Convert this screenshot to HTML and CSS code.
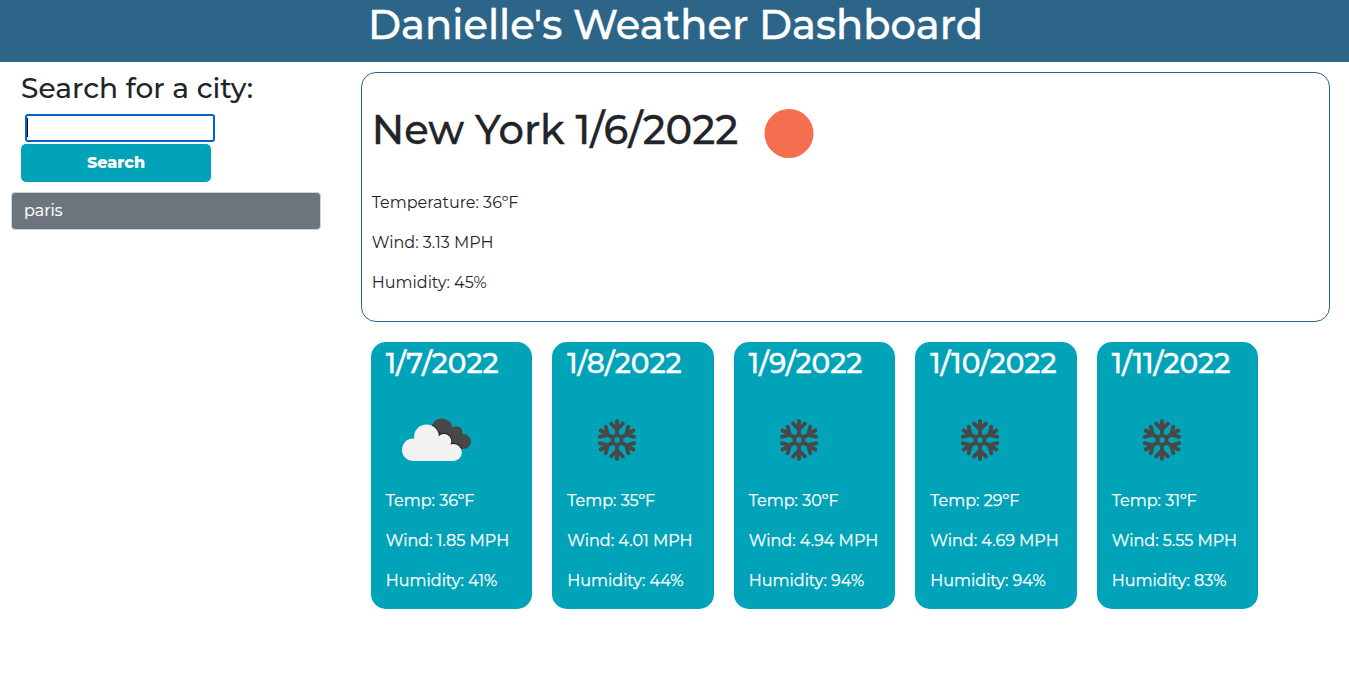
FILE: index.html
```html
<!DOCTYPE html>
<html lang="en">
<head>
<meta charset="utf-8">
<title>Weather Dashboard</title>
<link rel="stylesheet" href="styles.css">
</head>
<body>
<svg class="defs" aria-hidden="true">
  <symbol id="snow" viewBox="0 0 100 100">
    <g fill="none" stroke="#484848" stroke-width="3.9" stroke-linecap="round" stroke-linejoin="round">
      <g id="arm"><path d="M50 45V31.1M44.2 33.6L50 39.4L55.8 33.6"/></g>
      <use href="#arm" transform="rotate(60 50 50)"/>
      <use href="#arm" transform="rotate(120 50 50)"/>
      <use href="#arm" transform="rotate(180 50 50)"/>
      <use href="#arm" transform="rotate(240 50 50)"/>
      <use href="#arm" transform="rotate(300 50 50)"/>
      <circle cx="50" cy="50" r="4.5" stroke-width="3.6"/>
    </g>
  </symbol>
</svg>
<header class="banner"><h1 class="banner-title">Danielle's Weather Dashboard</h1></header>
<main class="layout">
  <aside class="sidebar">
    <form class="search">
      <h3 class="search-title">Search for a city:</h3>
      <input class="search-input" type="text" aria-label="City">
      <button class="search-button" type="button">Search</button>
    </form>
    <ul class="history"><li class="history-item">paris</li></ul>
  </aside>
  <div class="content">
    <section class="current">
      <div class="current-head">
        <h1 class="current-title">New York 1/6/2022</h1>
        <svg class="icon" viewBox="0 0 100 100"><circle cx="50" cy="49.5" r="24.5" fill="#f66e50"/></svg>
      </div>
      <p class="line">Temperature: 36ºF</p>
      <p class="line">Wind: 3.13 MPH</p>
      <p class="line">Humidity: 45%</p>
    </section>
    <section class="forecast">
      <article class="card">
        <h3 class="card-title">1/7/2022</h3>
        <svg class="icon" viewBox="0 0 100 100">
          <clipPath id="back"><circle cx="56" cy="39.3" r="10.8"/><circle cx="70.5" cy="42.3" r="6"/><circle cx="77.5" cy="51.5" r="7.5"/><path d="M55 38L72 40L80 55L70 59H50Z"/></clipPath>
          <g clip-path="url(#back)">
            <path fill="#48484a" d="M30 20H90V80H30Z"/>
            <g fill="none" stroke="#26282b" stroke-width="2.4"><circle cx="40.5" cy="46.8" r="12.4"/><circle cx="58" cy="51.3" r="7.3"/><circle cx="67.3" cy="62.5" r="8.5"/></g>
          </g>
          <g fill="#f2f2f0"><circle cx="27.3" cy="59.8" r="11.3"/><circle cx="40.5" cy="46.8" r="12.4"/><circle cx="58" cy="51.3" r="7.3"/><circle cx="67.3" cy="62.5" r="8.5"/><path d="M27 52L40 40L59 50L68 61V71H27Z"/></g>
        </svg>
        <p class="line">Temp: 36ºF</p><p class="line">Wind: 1.85 MPH</p><p class="line">Humidity: 41%</p>
      </article>
      <article class="card">
        <h3 class="card-title">1/8/2022</h3>
        <svg class="icon"><use href="#snow"/></svg>
        <p class="line">Temp: 35ºF</p><p class="line">Wind: 4.01 MPH</p><p class="line">Humidity: 44%</p>
      </article>
      <article class="card">
        <h3 class="card-title">1/9/2022</h3>
        <svg class="icon"><use href="#snow"/></svg>
        <p class="line">Temp: 30ºF</p><p class="line">Wind: 4.94 MPH</p><p class="line">Humidity: 94%</p>
      </article>
      <article class="card">
        <h3 class="card-title">1/10/2022</h3>
        <svg class="icon"><use href="#snow"/></svg>
        <p class="line">Temp: 29ºF</p><p class="line">Wind: 4.69 MPH</p><p class="line">Humidity: 94%</p>
      </article>
      <article class="card">
        <h3 class="card-title">1/11/2022</h3>
        <svg class="icon"><use href="#snow"/></svg>
        <p class="line">Temp: 31ºF</p><p class="line">Wind: 5.55 MPH</p><p class="line">Humidity: 83%</p>
      </article>
    </section>
  </div>
</main>
</body>
</html>
```
FILE: styles.css
```css
* { box-sizing: border-box; }
body { margin: 0; background: #fff; color: #212529; font: 400 16px/24px Montserrat, Inter, sans-serif; white-space: nowrap; }
h1, h3, p, ul { margin: 0; padding: 0; font-weight: 500; }
.defs { display: block; width: 0; height: 0; }
.banner { height: 62px; padding: 1px 0 0 2px; background: #2d6588; color: #fff; text-align: center; }
.banner-title { font-size: 40px; line-height: 48px; -webkit-text-stroke: 0.4px; }
.layout { display: flex; }
.sidebar { flex: none; width: 360.75px; padding: 9px 39.75px 0 11px; }
.search { display: flex; flex-direction: column; align-items: flex-start; padding-left: 10px; }
.search-title { font-size: 28px; line-height: 34px; letter-spacing: 0.04px; }
.search-input { width: 190px; height: 28px; margin: 9px 0 2px 4px; border: 2px solid #0560c9; border-radius: 3px; outline: 0; background: linear-gradient(#000, #000) 0 2px / 1px 19px no-repeat #fff; }
.search-button { width: 190px; height: 38px; border: 0; border-radius: 5px; background: #00a3b8; color: #fff; font: 800 16px/24px Montserrat, Inter, sans-serif; }
.history { margin-top: 10px; list-style: none; }
.history-item { height: 38px; padding: 6px 12px; border: 1px solid #ced4da; border-radius: 4px; background: #6c757d; color: #fff; font-weight: 400; -webkit-text-stroke: 0.2px; }
.content { width: 969px; padding-top: 10px; }
.current { height: 250px; padding: 10.5px 10px 0; border: 1px solid #2d6588; border-radius: 15px; }
.current-head { display: flex; height: 107px; }
.current-title { width: 367px; padding-top: 22px; font-size: 40px; line-height: 48px; -webkit-text-stroke: 0.3px; }
.icon { display: block; width: 100px; height: 100px; flex: none; }
.line { height: 24px; margin-bottom: 16px; font-weight: 400; }
.forecast { display: grid; grid-template-columns: repeat(5, 161.5px); gap: 20px; padding: 20px 10px 0; }
.card { height: 267px; padding: 4px 15px 0; border-radius: 15px; background: #00a3b8; color: #fff; -webkit-text-stroke: 0.25px; }
.card-title { font-size: 28px; line-height: 34px; margin-bottom: 10px; -webkit-text-stroke: 0.4px; }
.card .icon { margin-bottom: -1px; }
```
